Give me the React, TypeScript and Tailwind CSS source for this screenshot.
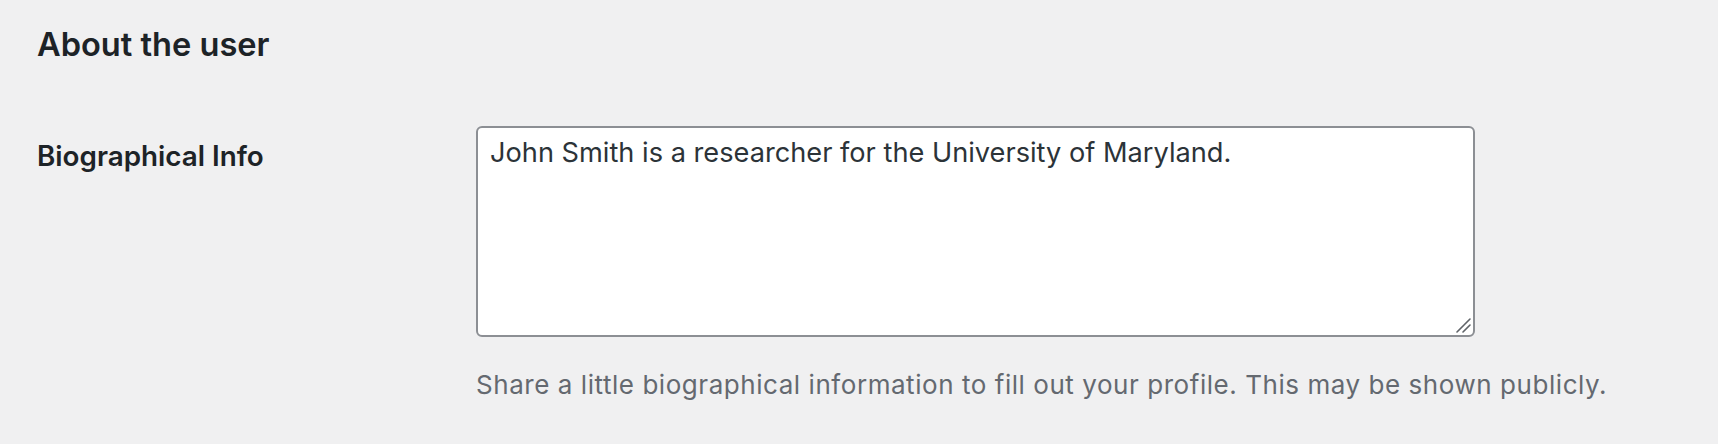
export default function App() {
  return (
    <div
      className="min-h-[444px] w-full bg-[#f0f0f1] pl-[37px] pt-[24px] text-[#1d2327]"
      style={{ fontFamily: 'Inter, "Noto Sans", sans-serif' }}
    >
      <h2 className="text-[32.6px] font-semibold leading-[40px]">About the user</h2>

      <div className="mt-[62px] flex">
        <div className="w-[439px] shrink-0 pt-[12px] text-[27.8px] font-semibold leading-[36px]">
          Biographical Info
        </div>
        <div className="flex flex-col items-start">
          <div className="relative">
            <textarea
              className="block h-[211px] w-[999px] resize-none rounded-[6px] border-2 border-[#8c8f94] bg-white px-[12px] pt-[7px] text-[27.2px] leading-[36px] text-[#2c3338] outline-none"
              style={{ fontFamily: 'Inter, "Noto Sans", sans-serif' }}
              defaultValue="John Smith is a researcher for the University of Maryland."
            />
            <svg
              className="pointer-events-none absolute bottom-[4px] right-[4px] h-[16px] w-[16px]"
              viewBox="0 0 16 16"
            >
              <path d="M2 15 L15 2 M8 15 L15 8" stroke="#5f6368" strokeWidth="1.6" strokeLinecap="round" />
            </svg>
          </div>
          <p className="mt-[31px] text-[26px] leading-[34px] tracking-[0.55px] text-[#646970]">
            Share a little biographical information to fill out your profile. This may be shown publicly.
          </p>
        </div>
      </div>
    </div>
  );
}
